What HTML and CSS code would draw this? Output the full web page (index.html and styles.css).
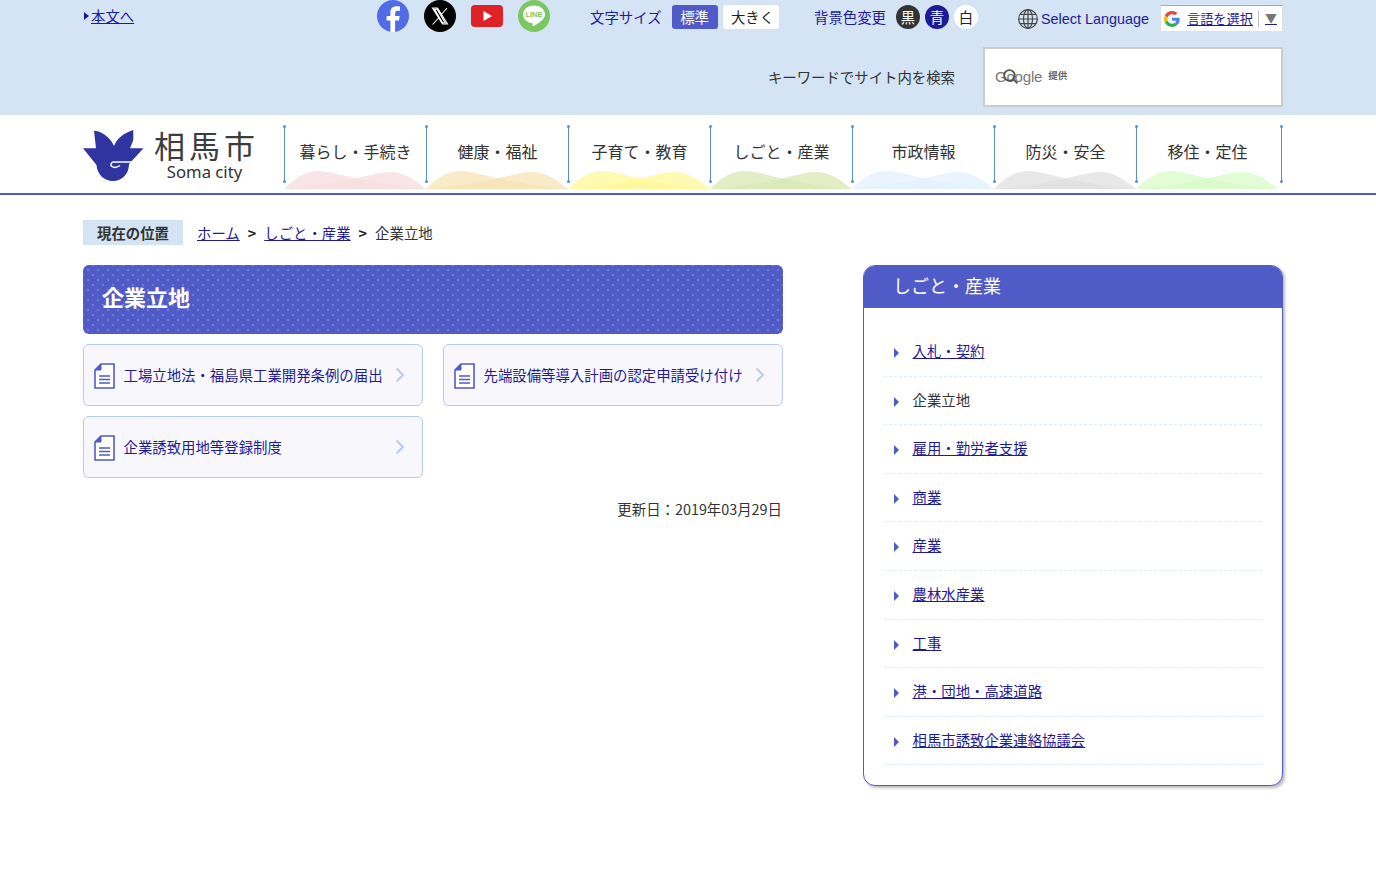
FILE: index.html
```html
<!DOCTYPE html>
<html lang="ja">
<head>
    <meta charset="utf-8">
    <meta name="viewport" content="width=device-width, initial-scale=1.0">
    <title>企業立地 | 相馬市</title>
    <link rel="stylesheet" href="styles.css">
</head>
<body>
    <header class="head">
        <div class="wrap">
            <div class="head-top">
                <a class="skip" href="#main">本文へ</a>
                <div class="sns">
                    <svg class="sns-icon" viewBox="0 0 32 32"><circle cx="16" cy="16" r="16" fill="#4f6ce6"/><path d="M13.4 32V20.6H9.6v-4.7h3.8v-3.4c0-4 2.4-6.2 6-6.2 1.7 0 3.2.3 3.6.3v4.1h-2.4c-2 0-2.5 1-2.5 2.4v2.8h4.6l-.7 4.7h-3.9V32z" fill="#fff"/></svg>
                    <svg class="sns-icon" viewBox="0 0 32 32"><circle cx="16" cy="16" r="16" fill="#000"/><path d="M8.5 8h5l10 16h-5zM10.6 9.2l7.9 13.6h2.6L13.1 9.200zM23 8l-6 7M15 17.500 8.700 24.500" fill="none" stroke="#fff" stroke-width="1.100"/></svg>
                    <svg class="sns-icon yt" viewBox="0 0 32 22"><rect width="32" height="22" rx="4" fill="#dd2326"/><path d="M12.500 6l8.500 5-8.500 5z" fill="#fff"/></svg>
                    <svg class="sns-icon" viewBox="0 0 32 32"><circle cx="16" cy="16" r="16" fill="#7bc863"/><path d="M16 5.500c-6.100 0-11 4-11 8.900 0 4.400 3.900 8 9.100 8.800.9.200.7 1.100.5 2.300 0 .6.500.8 1 .5 3.200-1.800 11.400-6.500 11.400-11.600 0-4.900-4.900-8.900-11-8.900z" fill="#fff"/><text class="line-text" x="16" y="17" text-anchor="middle">LINE</text></svg>
                </div>
                <div class="size">
                    <span class="tool-label">文字サイズ</span>
                    <span class="size-btn size-on">標準</span>
                    <span class="size-btn size-big">大きく</span>
                </div>
                <div class="color">
                    <span class="tool-label">背景色変更</span>
                    <span class="color-btn c-black">黒</span>
                    <span class="color-btn c-blue">青</span>
                    <span class="color-btn c-white">白</span>
                </div>
                <div class="lang">
                    <svg class="globe" viewBox="0 0 20 20" fill="none" stroke="#444" stroke-width="1.200"><circle cx="10" cy="10" r="9.300"/><ellipse cx="10" cy="10" rx="4.500" ry="9.300"/><path d="M10 .7v18.600M.7 10h18.600M2 5.300h16M2 14.700h16"/></svg>
                    <span class="lang-text">Select Language</span>
                </div>
                <div class="translate">
                    <svg class="g-logo" viewBox="0 0 48 48"><path fill="#ea4335" d="M24 9.500c3.500 0 6.700 1.200 9.200 3.600l6.900-6.900C35.900 2.400 30.500 0 24 0 14.600 0 6.500 5.400 2.600 13.200l8 6.200C12.500 13.700 17.800 9.500 24 9.500z"/><path fill="#4285f4" d="M47 24.500c0-1.600-.1-3.100-.4-4.500H24v9h12.900c-.6 3-2.200 5.500-4.700 7.200l7.700 6C44.400 37.900 47 31.800 47 24.500z"/><path fill="#fbbc05" d="M10.600 28.600c-.5-1.400-.8-3-.8-4.600s.3-3.200.8-4.600l-8-6.200C.9 16.500 0 20.100 0 24s.9 7.500 2.600 10.800z"/><path fill="#34a853" d="M24 48c6.500 0 11.900-2.100 15.900-5.800l-7.700-6c-2.200 1.400-4.900 2.300-8.200 2.300-6.200 0-11.500-4.200-13.400-9.900l-8 6.200C6.500 42.600 14.600 48 24 48z"/></svg>
                    <a class="translate-link" href="#">言語を選択</a>
                    <span class="translate-arrow">▼</span>
                </div>
            </div>
            <div class="head-search">
                <span class="search-label">キーワードでサイト内を検索</span>
                <div class="search-box">
                    <span class="google-mark">Google
                        <svg class="lens" viewBox="0 0 16 16" fill="none" stroke="#555" stroke-width="1.800"><circle cx="7" cy="7" r="5"/><path d="M10.500 10.500l4 4"/></svg>
                    </span>
                    <span class="google-by">提供</span>
                </div>
            </div>
        </div>
    </header>

    <nav class="bar">
        <div class="wrap bar-in">
            <a class="logo" href="#">
                <svg class="logo-mark" viewBox="0 0 61 51"><path d="M0 18.300H13L11 .7C17 1 27 6 31 16 34 8 41 3 50.300 0V10L47 18.300H60.500L46 34C46 44 39 51 30 51S14 44 13.500 35z" fill="#2e35a0"/><path d="M49 32H31c-3 0-4 3-2 4.500s5 1 8-1" fill="none" stroke="#fff" stroke-width="1.500"/></svg>
                <span class="logo-text">
                    <span class="logo-ja">相馬市</span>
                    <span class="logo-en">Soma city</span>
                </span>
            </a>
            <ul class="gnav">
                <li class="gnav-item hill-pink"><a href="#">暮らし・手続き</a><svg class="hill" viewBox="0 0 142 18"><path d="M0 18C12 6 22 0 35 0c16 0 40 12 107 18z"/><path d="M0 18C70 12 88 1 106 1c13 0 24 7 36 17z"/></svg></li>
                <li class="gnav-item hill-orange"><a href="#">健康・福祉</a><svg class="hill" viewBox="0 0 142 18"><path d="M0 18C12 6 22 0 35 0c16 0 40 12 107 18z"/><path d="M0 18C70 12 88 1 106 1c13 0 24 7 36 17z"/></svg></li>
                <li class="gnav-item hill-yellow"><a href="#">子育て・教育</a><svg class="hill" viewBox="0 0 142 18"><path d="M0 18C12 6 22 0 35 0c16 0 40 12 107 18z"/><path d="M0 18C70 12 88 1 106 1c13 0 24 7 36 17z"/></svg></li>
                <li class="gnav-item hill-olive"><a href="#">しごと・産業</a><svg class="hill" viewBox="0 0 142 18"><path d="M0 18C12 6 22 0 35 0c16 0 40 12 107 18z"/><path d="M0 18C70 12 88 1 106 1c13 0 24 7 36 17z"/></svg></li>
                <li class="gnav-item hill-blue"><a href="#">市政情報</a><svg class="hill" viewBox="0 0 142 18"><path d="M0 18C12 6 22 0 35 0c16 0 40 12 107 18z"/><path d="M0 18C70 12 88 1 106 1c13 0 24 7 36 17z"/></svg></li>
                <li class="gnav-item hill-gray"><a href="#">防災・安全</a><svg class="hill" viewBox="0 0 142 18"><path d="M0 18C12 6 22 0 35 0c16 0 40 12 107 18z"/><path d="M0 18C70 12 88 1 106 1c13 0 24 7 36 17z"/></svg></li>
                <li class="gnav-item hill-green"><a href="#">移住・定住</a><svg class="hill" viewBox="0 0 142 18"><path d="M0 18C12 6 22 0 35 0c16 0 40 12 107 18z"/><path d="M0 18C70 12 88 1 106 1c13 0 24 7 36 17z"/></svg></li>
                <li class="gnav-item gnav-end"></li>
            </ul>
        </div>
    </nav>

    <div class="wrap" id="main">
        <div class="crumb">
            <span class="crumb-here">現在の位置</span>
            <a href="#">ホーム</a>
            <span class="crumb-sep">&gt;</span>
            <a href="#">しごと・産業</a>
            <span class="crumb-sep">&gt;</span>
            <span>企業立地</span>
        </div>
        <div class="columns">
            <main class="content">
                <h1 class="page-title">企業立地</h1>
                <div class="cards">
                    <a class="card" href="#">
                        <svg class="doc" viewBox="0 0 21 26"><path d="M7 1h13v24H1V7z" fill="#fff" stroke="#515bc7" stroke-width="1.600"/><path d="M7 1v6H1z" fill="#515bc7" stroke="#515bc7"/><path d="M5 13h11M5 16.500h11M5 20h11" stroke="#515bc7" stroke-width="1.300"/></svg>
                        <span class="card-text">工場立地法・福島県工業開発条例の届出</span>
                        <svg class="chev" viewBox="0 0 10 16"><path d="M1.500 1.500L8 8l-6.500 6.500" fill="none" stroke="#b7cbee" stroke-width="2"/></svg>
                    </a>
                    <a class="card" href="#">
                        <svg class="doc" viewBox="0 0 21 26"><path d="M7 1h13v24H1V7z" fill="#fff" stroke="#515bc7" stroke-width="1.600"/><path d="M7 1v6H1z" fill="#515bc7" stroke="#515bc7"/><path d="M5 13h11M5 16.500h11M5 20h11" stroke="#515bc7" stroke-width="1.300"/></svg>
                        <span class="card-text">先端設備等導入計画の認定申請受け付け</span>
                        <svg class="chev" viewBox="0 0 10 16"><path d="M1.500 1.500L8 8l-6.500 6.500" fill="none" stroke="#b7cbee" stroke-width="2"/></svg>
                    </a>
                    <a class="card" href="#">
                        <svg class="doc" viewBox="0 0 21 26"><path d="M7 1h13v24H1V7z" fill="#fff" stroke="#515bc7" stroke-width="1.600"/><path d="M7 1v6H1z" fill="#515bc7" stroke="#515bc7"/><path d="M5 13h11M5 16.500h11M5 20h11" stroke="#515bc7" stroke-width="1.300"/></svg>
                        <span class="card-text">企業誘致用地等登録制度</span>
                        <svg class="chev" viewBox="0 0 10 16"><path d="M1.500 1.500L8 8l-6.500 6.500" fill="none" stroke="#b7cbee" stroke-width="2"/></svg>
                    </a>
                </div>
                <p class="updated">更新日：2019年03月29日</p>
            </main>
            <aside class="side">
                <h2 class="side-title">しごと・産業</h2>
                <ul class="side-list">
                    <li><a href="#">入札・契約</a></li>
                    <li><span>企業立地</span></li>
                    <li><a href="#">雇用・勤労者支援</a></li>
                    <li><a href="#">商業</a></li>
                    <li><a href="#">産業</a></li>
                    <li><a href="#">農林水産業</a></li>
                    <li><a href="#">工事</a></li>
                    <li><a href="#">港・団地・高速道路</a></li>
                    <li><a href="#">相馬市誘致企業連絡協議会</a></li>
                </ul>
            </aside>
        </div>
    </div>
</body>
</html>
```

FILE: styles.css
```css
*{
    box-sizing: border-box;
}
body{
    margin: 0;
    height: 888px;
    overflow: hidden;
    background-color: #fff;
    color: #333;
    font-family: "Noto Sans CJK JP", "Liberation Sans", sans-serif;
    font-size: 14.4px;
    line-height: 1.4;
}
a{
    color: #1f1a99;
}
ul{
    margin: 0;
    padding: 0;
    list-style: none;
}
.wrap{
    width: 1200px;
    margin-left: 83px;
}

/* header */
.head{
    height: 115px;
    background-color: #d4e4f5;
}
.head-top{
    display: flex;
    height: 33px;
    align-items: flex-start;
}
.skip{
    width: 294px;
    margin-top: 6px;
    padding-left: 8px;
    position: relative;
    font-size: 14.4px;
    line-height: 20px;
}
.skip::before{
    content: "";
    position: absolute;
    left: 1px;
    top: 6px;
    border-left: 5px solid #1f1a99;
    border-top: 4px solid transparent;
    border-bottom: 4px solid transparent;
}
.sns{
    display: flex;
    gap: 15px;
    width: 213px;
}
.sns-icon{
    display: block;
    width: 32px;
    height: 32px;
}
.sns-icon.yt{
    height: 22px;
    margin-top: 5px;
}
.line-text{
    font-family: "Liberation Sans", sans-serif;
    font-size: 7.500px;
    font-weight: bold;
    fill: #7bc863;
}
.size{
    display: flex;
    align-items: center;
    width: 224px;
    margin-top: 5px;
    height: 24px;
}
.tool-label{
    color: #1f1a99;
    margin-right: 10px;
}
.size-btn{
    height: 24px;
    line-height: 24px;
    text-align: center;
    border-radius: 3px;
}
.size-on{
    width: 46px;
    margin-right: 5px;
    background-color: #515bc7;
    color: #fff;
}
.size-big{
    width: 56px;
    padding-left: 4px;
    background-color: #fff;
    color: #222;
}
.color{
    display: flex;
    align-items: center;
    width: 204px;
    margin-top: 5px;
    height: 24px;
}
.color-btn{
    width: 24px;
    height: 24px;
    line-height: 24px;
    margin-right: 5px;
    border-radius: 50%;
    text-align: center;
}
.c-black{
    background-color: #333;
    color: #fff;
}
.c-blue{
    background-color: #1f1a99;
    color: #fff;
}
.c-white{
    background-color: #fff;
    color: #222;
}
.lang{
    display: flex;
    align-items: center;
    width: 142px;
    margin-top: 9px;
    height: 20px;
}
.globe{
    width: 20px;
    height: 20px;
    margin-right: 3px;
}
.lang-text{
    font-family: "Liberation Sans", sans-serif;
    font-size: 14.400px;
    color: #1f1a99;
    white-space: nowrap;
}
.translate{
    display: flex;
    align-items: center;
    width: 123px;
    height: 26px;
    margin-top: 5px;
    padding-left: 3px;
    background-color: #fff;
    border-top: 1px solid #aaa;
    border-right: 1px solid #ddd;
    border-left: 1px solid #ddd;
}
.g-logo{
    width: 16px;
    height: 16px;
    margin-right: 7px;
}
.translate-link{
    font-size: 13.200px;
    padding-right: 5px;
    border-right: 1px solid #bbb;
    line-height: 16px;
}
.translate-arrow{
    margin-left: 6px;
    font-size: 12px;
    color: #777;
    text-decoration: underline;
    text-decoration-color: #1f1a99;
}
.head-search{
    display: flex;
    align-items: center;
    justify-content: flex-end;
    gap: 28px;
    margin-top: 14px;
}
.search-box{
    display: flex;
    align-items: center;
    width: 300px;
    height: 60px;
    padding-left: 10px;
    padding-bottom: 2px;
    background-color: #fff;
    border: 2px solid #ccc;
}
.google-mark{
    position: relative;
    font-family: "Liberation Sans", sans-serif;
    font-size: 15px;
    color: #777;
    letter-spacing: -0.2px;
    margin-right: 6px;
}
.lens{
    position: absolute;
    left: 7px;
    top: 2px;
    width: 17px;
    height: 17px;
}
.google-by{
    font-size: 9.500px;
    font-weight: bold;
    color: #666;
}

/* navigation */
.bar{
    height: 80px;
    border-bottom: 2px solid #515bc7;
}
.bar-in{
    display: flex;
}
.logo{
    display: flex;
    width: 201px;
    padding-top: 15px;
    text-decoration: none;
    color: #333;
}
.logo-mark{
    width: 61px;
    height: 51px;
    flex: none;
}
.logo-text{
    display: flex;
    flex-direction: column;
    align-items: center;
    width: 101px;
    margin-left: 10px;
}
.logo-ja{
    font-size: 31px;
    line-height: 30px;
    letter-spacing: 4px;
    margin-right: -4px;
    color: #3c3c3c;
    white-space: nowrap;
}
.logo-en{
    font-size: 16.700px;
    line-height: 19px;
    margin-top: 2px;
    font-family: "Noto Sans", sans-serif;
    white-space: nowrap;
}
.gnav{
    display: flex;
    padding-top: 11px;
}
.gnav-item{
    position: relative;
    width: 142px;
    height: 56px;
    border-left: 1px solid #5b8fc9;
    text-align: center;
    font-size: 16px;
    line-height: 50px;
}
.gnav-item::before,
.gnav-item::after{
    content: "";
    position: absolute;
    left: -2px;
    width: 3px;
    height: 3px;
    border-radius: 50%;
    background-color: #5b8fc9;
}
.gnav-item::before{
    top: -1px;
}
.gnav-item::after{
    bottom: -1px;
}
.gnav-item a{
    color: #333;
    text-decoration: none;
}
.gnav-end{
    width: 2px;
    margin-left: 3px;
}
.hill{
    position: absolute;
    left: -1px;
    top: 45px;
    display: block;
    width: 142px;
    height: 18px;
}
.hill path{
    opacity: 0.75;
}
.hill-pink path{
    fill: #f7dcdf;
}
.hill-orange path{
    fill: #f7e3b5;
}
.hill-yellow path{
    fill: #fdf898;
}
.hill-olive path{
    fill: #dae8b4;
}
.hill-blue path{
    fill: #e2f0fd;
}
.hill-gray path{
    fill: #e0e0e0;
}
.hill-green path{
    fill: #d8fbc8;
}

/* breadcrumb */
.crumb{
    display: flex;
    align-items: flex-start;
    height: 25px;
    margin-top: 25px;
    line-height: 26px;
}
.crumb-here{
    width: 100px;
    height: 25px;
    line-height: 25px;
    margin-right: 14px;
    text-align: center;
    font-weight: bold;
    background-color: #d4e4f5;
}
.crumb-sep{
    margin: 0 8px;
    font-weight: bold;
    color: #222;
}

/* main */
.columns{
    display: flex;
    justify-content: space-between;
    align-items: flex-start;
    margin-top: 20px;
}
.content{
    width: 700px;
}
.page-title{
    margin: 0;
    height: 69px;
    padding-left: 19px;
    border-radius: 6px;
    background-color: #515bc7;
    background-image: radial-gradient(circle, #717ad3 1.300px, transparent 1.600px), radial-gradient(circle, #717ad3 1.300px, transparent 1.600px);
    background-size: 10px 10px;
    background-position: 0 0, 5px 5px;
    color: #fff;
    font-size: 22px;
    font-weight: bold;
    line-height: 63px;
}
.cards{
    display: grid;
    grid-template-columns: 340px 340px;
    column-gap: 20px;
    row-gap: 10px;
    margin-top: 10px;
}
.card{
    display: flex;
    align-items: center;
    height: 62px;
    padding: 0 17px 0 10px;
    background-color: #f8f8fc;
    border: 1px solid #b7cbee;
    border-radius: 6px;
    text-decoration: none;
}
.doc{
    width: 21px;
    height: 26px;
    flex: none;
    margin-top: 1px;
}
.card-text{
    flex: 1;
    margin-left: 8.500px;
    white-space: nowrap;
    margin-top: 1px;
}
.chev{
    width: 10px;
    height: 16px;
    flex: none;
    margin-top: -1px;
}
.updated{
    margin: 21px 1px 0 0;
    text-align: right;
    line-height: 20px;
}

/* side menu */
.side{
    width: 420px;
    height: 521px;
    background-color: #fff;
    border: 1px solid #515bc7;
    border-radius: 12px;
    box-shadow: 2px 2px 3px #bbb;
    overflow: hidden;
}
.side-title{
    margin: 0;
    height: 42px;
    padding-left: 29px;
    background-color: #515bc7;
    color: #fff;
    font-size: 18px;
    font-weight: normal;
    line-height: 39px;
}
.side-list{
    margin: 20px 20px 0;
}
.side-list li{
    position: relative;
    height: 48.600px;
    padding-left: 28.500px;
    line-height: 46.500px;
    border-bottom: 1px dashed #deebf5;
}
.side-list li::before{
    content: "";
    position: absolute;
    left: 10px;
    top: 20px;
    border-left: 5px solid #515bc7;
    border-top: 5px solid transparent;
    border-bottom: 5px solid transparent;
}
```
